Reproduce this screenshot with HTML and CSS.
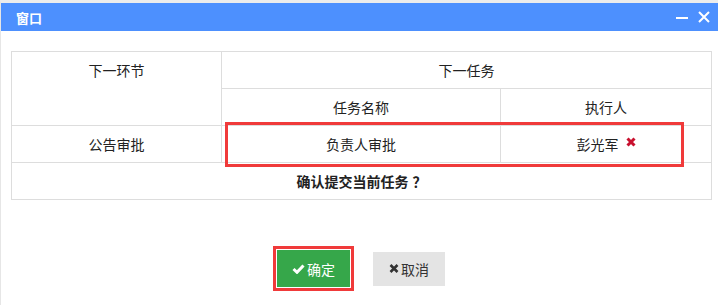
FILE: index.html
```
<!DOCTYPE html>
<html lang="zh-CN">
<head>
<meta charset="utf-8">
<title>窗口</title>
<link rel="stylesheet" href="styles.css">
</head>
<body>
<div class="window">
  <div class="titlebar">
    <span class="title">窗口</span>
    <div class="tools">
      <svg class="tool" width="12" height="12" viewBox="0 0 12 12"><rect x="0" y="6" width="12" height="2" fill="#fff"/></svg>
      <svg class="tool" width="12" height="12" viewBox="0 0 12 12"><path d="M1 1 L11 11 M11 1 L1 11" stroke="#fff" stroke-width="2" fill="none"/></svg>
    </div>
  </div>
  <div class="content">
    <div class="grid-wrap">
      <table class="grid">
        <colgroup><col class="c1"><col class="c2"><col class="c3"></colgroup>
        <tr>
          <td rowspan="2" class="top">下一环节</td>
          <td colspan="2">下一任务</td>
        </tr>
        <tr>
          <td>任务名称</td>
          <td>执行人</td>
        </tr>
        <tr>
          <td>公告审批</td>
          <td>负责人审批</td>
          <td><span class="person">彭光军<svg class="del" width="10" height="10" viewBox="0 0 10 10"><path d="M1.5 1.5 L8.5 8.5 M8.5 1.5 L1.5 8.5" stroke="#c8102e" stroke-width="3" fill="none"/></svg></span></td>
        </tr>
        <tr>
          <td colspan="3" class="confirm">确认提交当前任务<span class="qm">？</span></td>
        </tr>
      </table>
      <div class="highlight"></div>
    </div>
    <div class="actions">
      <div class="focus-ring">
        <button class="btn btn-ok"><svg class="ico" width="13" height="10" viewBox="0 0 13 10"><path d="M1.5 5 L5 8.3 L11.5 1.5" stroke="#fff" stroke-width="3" fill="none"/></svg>确定</button>
      </div>
      <button class="btn btn-cancel"><svg class="ico" width="10" height="9" viewBox="0 0 10 9"><path d="M1.5 1 L8.5 8 M8.5 1 L1.5 8" stroke="#333" stroke-width="2.6" fill="none"/></svg>取消</button>
    </div>
  </div>
</div>
</body>
</html>
```
FILE: styles.css
```
html, body {
  margin: 0;
  padding: 0;
  background: #fff;
}
body {
  font-family: "Noto Sans CJK SC", "Noto Sans", sans-serif;
  font-size: 14px;
  color: #222;
}
.window {
  border-top: 3px solid #ececec;
  border-left: 1px solid #e6e6e6;
  height: 305px;
  box-sizing: border-box;
}
.titlebar {
  height: 28px;
  background: #4d90fe;
  display: flex;
  align-items: center;
  justify-content: space-between;
  padding: 0 8px 0 15px;
}
.title {
  color: #fff;
  font-size: 13px;
  font-weight: bold;
}
.tools {
  display: flex;
  gap: 10px;
  align-items: center;
}
.tool { display: block; }
.content {
  padding: 20px 7px 0 10px;
}
.grid-wrap {
  position: relative;
  width: 700px;
}
.grid {
  border-collapse: collapse;
  table-layout: fixed;
  width: 700px;
}
.c1 { width: 210px; }
.c2 { width: 279px; }
.c3 { width: 211px; }
.grid td {
  border: 1px solid #dddddd;
  height: 36px;
  padding: 0;
  text-align: center;
  vertical-align: middle;
  line-height: 20px;
}
.grid td.top {
  vertical-align: top;
  padding-top: 8px;
}
.person {
  display: inline-flex;
  align-items: flex-start;
  gap: 7px;
}
.del {
  margin-top: 3px;
}
.confirm {
  font-weight: bold;
}
.qm {
  margin-left: 4px;
}
.highlight {
  position: absolute;
  left: 214px;
  top: 71px;
  width: 459px;
  height: 45px;
  box-sizing: border-box;
  border: 3px solid #f03a3a;
}
.actions {
  display: flex;
  justify-content: center;
  align-items: center;
  gap: 19px;
  margin: 46px 4px 0 0;
}
.focus-ring {
  border: 3px solid #f03a3a;
  padding: 1px;
  background: #fff;
  display: flex;
}
.btn {
  border: 0;
  font-family: "Noto Sans CJK SC", "Noto Sans", sans-serif;
  font-size: 14px;
  width: 72px;
  display: flex;
  align-items: center;
  justify-content: center;
  gap: 2px;
  padding: 0;
}
.btn-ok {
  background: #36a74a;
  color: #fff;
  height: 37px;
  width: 73px;
}
.btn-cancel {
  background: #e4e4e4;
  color: #333;
  height: 34px;
}
.ico { display: block; }
```
